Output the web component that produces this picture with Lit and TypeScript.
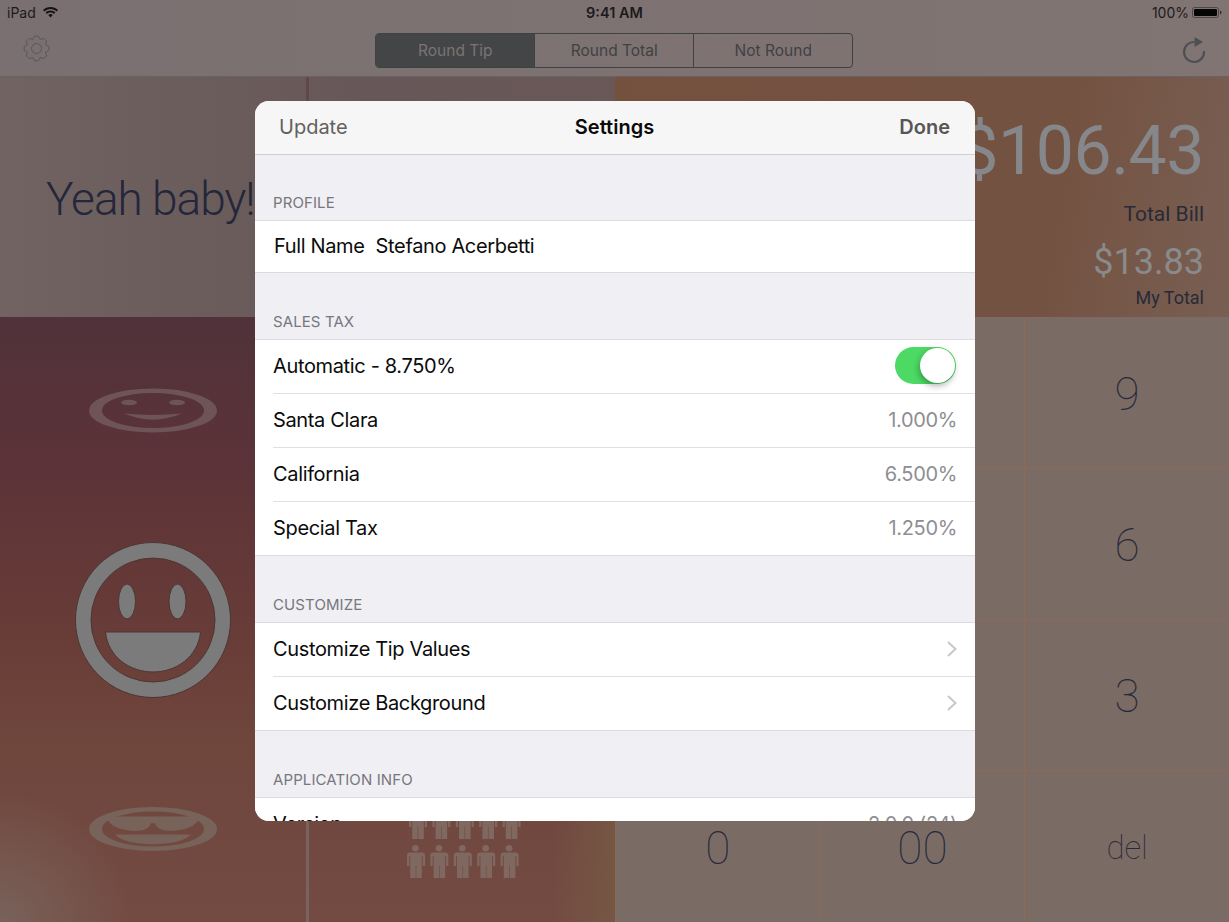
import { LitElement, html, css, svg } from 'lit';
import { customElement } from 'lit/decorators.js';

type Row = { label: string; value?: string; toggle?: boolean; chevron?: boolean };

const SECTIONS: { title: string; rows: Row[] }[] = [
  { title: 'SALES TAX', rows: [
    { label: 'Automatic - 8.750%', toggle: true },
    { label: 'Santa Clara', value: '1.000%' },
    { label: 'California', value: '6.500%' },
    { label: 'Special Tax', value: '1.250%' },
  ] },
  { title: 'CUSTOMIZE', rows: [
    { label: 'Customize Tip Values', chevron: true },
    { label: 'Customize Background', chevron: true },
  ] },
  { title: 'APPLICATION INFO', rows: [
    { label: 'Version', value: '2.0.0 (24)' },
  ] },
];

// the first two columns of the upper rows sit behind the settings sheet
const KEYS = ['', '', '9', '', '', '6', '', '', '3', '0', '00', 'del'];

// gear outline built from teeth around a circle
function gearPath(cx: number, cy: number, outer: number, inner: number, teeth: number) {
  const pts: string[] = [];
  for (let i = 0; i < teeth; i++) {
    const a = (i / teeth) * Math.PI * 2;
    const s = (Math.PI * 2) / teeth;
    const seq: [number, number][] = [
      [a - s * 0.5, inner],
      [a - s * 0.2, outer],
      [a + s * 0.2, outer],
    ];
    for (const [ang, r] of seq) {
      pts.push(`${(cx + Math.cos(ang) * r).toFixed(2)} ${(cy + Math.sin(ang) * r).toFixed(2)}`);
    }
  }
  return `M${pts.join('L')}Z`;
}

function person(x: number, y: number) {
  return svg`<g transform="translate(${x} ${y})" fill="#7f6860">
    <circle cx="9.500" cy="3.300" r="3.300" />
    <path d="M3 7.500h13q3 0 3 3v10.500h-2.300v-10h-.9v22h-5.500v-12.500h-.6v12.500h-5.500v-22h-.9v10h-2.300v-10.500q0-3 3-3z" />
  </g>`;
}

@customElement('app-root')
export class AppRoot extends LitElement {
  static styles = css`
    :host {
      display: block;
      width: 1229px;
      height: 922px;
      position: relative;
      overflow: hidden;
      font-family: Inter, 'Liberation Sans', sans-serif;
      background: #7d7373;
    }

    .topbar {
      height: 77px;
      box-sizing: border-box;
      background: linear-gradient(90deg, #7a7071, #817573);
      border-bottom: 1px solid #6a6161;
      display: flex;
      flex-direction: column;
    }

    .status {
      height: 24px;
      padding: 0 7px;
      display: grid;
      grid-template-columns: 1fr auto 1fr;
      align-items: center;
      font-size: 14px;
      color: #1c1a1b;
    }
    .status .left { display: flex; align-items: center; gap: 7px; }
    .status .time { font-weight: 600; font-size: 14.500px; }
    .status .right { display: flex; align-items: center; justify-content: flex-end; gap: 3px; }

    .tools {
      flex: 1;
      display: grid;
      grid-template-columns: 1fr auto 1fr;
      align-items: start;
      padding: 9px 23px 0 22.500px;
    }
    .tools svg { display: block; }
    .gear { margin-top: 2px; }
    .refresh { margin-top: 3px; justify-self: end; }

    .segments {
      display: flex;
      width: 478px;
      height: 35px;
      box-sizing: border-box;
      border: 1px solid #3f4143;
      border-radius: 4px;
      overflow: hidden;
    }
    .segments div {
      flex: 1;
      display: flex;
      align-items: center;
      justify-content: center;
      font-size: 15.500px;
      color: #3f4143;
      border-left: 1px solid #3f4143;
    }
    .segments div:first-child { border-left: 0; background: #434547; color: #7a7474; }

    .main {
      height: 845px;
      display: grid;
      grid-template-columns: 615px 614px;
      grid-template-rows: 240px 605px;
    }

    .message {
      background: linear-gradient(90deg, #716362, #675758 60%, #6a5857);
      display: flex;
      align-items: center;
      padding: 3px 0 0 46px;
      box-sizing: border-box;
      font-size: 46px;
      font-weight: 300;
      letter-spacing: -1px;
      color: #24273a;
      font-family: Roboto, sans-serif;
      position: relative;
    }
    .message::after {
      content: '';
      position: absolute;
      left: 306px;
      top: 0;
      width: 3px;
      height: 100%;
      background: #654648;
    }

    .totals {
      background: linear-gradient(100deg, #74503f, #745241 70%, #785f53);
      display: flex;
      flex-direction: column;
      align-items: flex-end;
      padding-right: 25px;
      font-family: Roboto, sans-serif;
    }
    .bill {
      font-size: 68px;
      color: #85878b;
      line-height: 80px;
      margin-top: 34px;
      letter-spacing: -0.5px;
    }
    .label { font-size: 21px; color: #272a38; line-height: 26px; }
    .bill-label { margin-top: 10px; }
    .mine { font-size: 36px; color: #8a8a8c; line-height: 42px; margin-top: 14px; }
    .mine-label { font-size: 18px; line-height: 22px; margin-top: 4px; }

    .tips {
      display: grid;
      grid-template-columns: 306px 3px 306px;
      background:
        radial-gradient(circle at 0 100%, #78625a 0, rgba(120, 98, 90, 0) 130px),
        linear-gradient(180deg, #50323a 0%, #5c3338 25%, #673b37 50%, #6f463c 70%, #744b43 100%);
    }
    .divider { background: #776360; }
    .faces { display: block; }
    .people {
      display: flex;
      flex-direction: column;
      justify-content: flex-end;
      align-items: center;
      padding-bottom: 44px;
      background: linear-gradient(90deg, transparent 80%, #755744);
    }
    .people svg { display: block; overflow: visible; }

    .keypad {
      display: grid;
      grid-template-columns: repeat(3, minmax(0, 1fr));
      grid-template-rows: repeat(4, minmax(0, 1fr));
      background: #7b6b65;
      font-family: Roboto, sans-serif;
      font-weight: 100;
      font-size: 46px;
      line-height: 1;
      color: #262a3a;
    }
    .keypad div {
      display: flex;
      align-items: center;
      justify-content: center;
      padding-top: 3px;
      border-left: 1px solid #8c6a56;
      border-bottom: 1px solid #8c6a56;
    }
    .keypad div:nth-last-child(-n + 3) { border-bottom: 0; }
    .keypad .word { font-size: 33px; }

    .sheet {
      position: absolute;
      left: 255px;
      top: 101px;
      width: 720px;
      height: 720px;
      border-radius: 14px;
      overflow: hidden;
      background: #efeff4;
      display: flex;
      flex-direction: column;
      font-family: Inter, 'Liberation Sans', sans-serif;
    }

    .nav {
      flex: none;
      height: 54px;
      box-sizing: border-box;
      background: #f6f6f6;
      border-bottom: 1px solid #cfcfd0;
      display: grid;
      grid-template-columns: 1fr auto 1fr;
      align-items: center;
      padding: 0 25px 2px 24px;
      font-size: 20px;
      color: #616161;
    }
    .nav .title { color: #0a0a0a; font-weight: 600; }
    .nav .done { justify-self: end; font-weight: 600; color: #565656; }

    .section-title {
      flex: none;
      height: 66px;
      box-sizing: border-box;
      padding: 0 0 8px 18px;
      font-size: 15px;
      letter-spacing: 0.1px;
      color: #77777c;
      display: flex;
      align-items: flex-end;
    }
    .section-title.first { height: 65px; }

    .group {
      flex: none;
      background: #fff;
      border-top: 1px solid #dcdce0;
      border-bottom: 1px solid #dcdce0;
    }

    .row {
      height: 54px;
      box-sizing: border-box;
      margin-left: 18px;
      padding: 0 18px 2px 0;
      display: flex;
      align-items: center;
      justify-content: space-between;
      font-size: 20px;
      letter-spacing: -0.35px;
      color: #0b0b0b;
      border-top: 1px solid #e0e0e3;
    }
    .row:first-child { border-top: 0; height: 53px; }
    .row .value { color: #8e8e93; }

    .row.name-row { height: 51px; margin-left: 19px; gap: 11px; justify-content: flex-start; }

    .toggle {
      width: 61px;
      height: 37px;
      margin-right: 1px;
      border-radius: 19px;
      background: #4cd964;
      position: relative;
    }
    .toggle::after {
      content: '';
      position: absolute;
      right: 1px;
      top: 1px;
      width: 35px;
      height: 35px;
      border-radius: 50%;
      background: #fff;
      box-shadow: -1px 3px 6px rgba(0, 0, 0, 0.3);
    }
  `;

  private renderFaces() {
    const light = '#6e5457';
    const lo = '#78635b';
    return html`<svg class="faces" width="306" height="605" viewBox="0 0 306 605">
      <!-- small smile, squashed -->
      <g transform="translate(153 93.500) scale(1 0.345)" fill=${light}>
        <circle r="57.500" fill="none" stroke=${light} stroke-width="13" />
        <ellipse cx="-24" cy="-23" rx="8" ry="8" />
        <ellipse cx="24" cy="-23" rx="8" ry="8" />
        <path d="M-29 9Q0 17 29 9Q0 44-29 9Z" />
      </g>
      <!-- big laughing face -->
      <g fill="#7b7b7b" stroke="#4d3634" stroke-width="1">
        <path fill-rule="evenodd" d="M153 225.500a77.500 77.500 0 1 0 0 155a77.500 77.500 0 1 0 0-155zM153 241a62 62 0 1 1 0 124a62 62 0 1 1 0-124z" />
        <ellipse cx="127" cy="284.500" rx="8.500" ry="17.500" />
        <ellipse cx="177.500" cy="284.500" rx="8.500" ry="17.500" />
        <path d="M105.500 315H200.500C198 340 176 355 153 355S108 340 105.500 315Z" />
      </g>
      <!-- sunglasses, squashed -->
      <g transform="translate(153 512) scale(1 0.345)" fill=${lo}>
        <circle r="57.500" fill="none" stroke=${lo} stroke-width="13" />
        <path d="M-41-36H41L46-30Q40 6 14 5Q4 2 2-17H-2Q-4 2-14 5Q-40 6-46-30Z" />
        <path d="M-38 16H38Q28 44 0 44Q-28 44-38 16Z" />
      </g>
    </svg>`;
  }

  private renderPeople() {
    const xs = [0, 23.400, 46.800, 70.200, 93.600];
    return html`<svg width="113" height="72" viewBox="0 0 113 72">
      ${xs.map((x) => person(x + 2, 0))}
      ${xs.map((x) => person(x, 39))}
    </svg>`;
  }

  private renderRow(r: Row) {
    return html`<div class="row">
      <span>${r.label}</span>
      ${r.value ? html`<span class="value">${r.value}</span>` : ''}
      ${r.toggle ? html`<div class="toggle"></div>` : ''}
      ${r.chevron
        ? html`<svg width="10" height="16" viewBox="0 0 10 16" fill="none" stroke="#c7c7cc" stroke-width="2"><path d="M1 1l7.500 7L1 15" /></svg>`
        : ''}
    </div>`;
  }

  render() {
    return html`
      <div class="topbar">
        <div class="status">
          <div class="left">
            <span>iPad</span>
            <svg width="15" height="11" viewBox="0 0 15 11" fill="#141213">
              <path d="M7.500 0C4.500 0 2 1.100 0 3l1.300 1.400C3 2.800 5.100 1.900 7.500 1.900s4.500.9 6.200 2.500L15 3C13 1.100 10.500 0 7.500 0z" />
              <path d="M7.500 3.600c-1.900 0-3.500.7-4.800 1.900L4 6.900c1-.9 2.100-1.400 3.500-1.400s2.500.5 3.500 1.400l1.300-1.400C11 4.300 9.400 3.600 7.500 3.600z" />
              <path d="M7.500 7C6.600 7 5.900 7.300 5.300 7.900l2.200 2.600 2.200-2.600C9.100 7.300 8.400 7 7.500 7z" />
            </svg>
          </div>
          <div class="time">9:41 AM</div>
          <div class="right">
            <span>100%</span>
            <svg width="30" height="11" viewBox="0 0 30 11">
              <rect x=".5" y=".5" width="26" height="10" rx="2" fill="none" stroke="#4b4748" />
              <rect x="2" y="2" width="23" height="7" rx="1" fill="#050505" />
              <path d="M28 3.500q1.500.5 1.500 2t-1.500 2z" fill="#2e2b2c" />
            </svg>
          </div>
        </div>
        <div class="tools">
          <svg class="gear" width="27" height="27" viewBox="0 0 27 27" fill="none" stroke="#5b5757" stroke-width="1">
            <path d=${gearPath(13.5, 13.5, 12.5, 9.8, 8)} stroke-linejoin="round" />
            <circle cx="13.5" cy="13.5" r="5" />
          </svg>
          <div class="segments">
            <div>Round Tip</div>
            <div>Round Total</div>
            <div>Not Round</div>
          </div>
          <svg class="refresh" width="24" height="28" viewBox="0 0 24 28" fill="none">
            <path d="M12.500 6A10 10 0 1 0 22 15" stroke="#4d4f52" stroke-width="2.200" />
            <path d="M12.500 1L21 6L12.500 11z" fill="#4d4f52" />
          </svg>
        </div>
      </div>

      <div class="main">
        <div class="message">Yeah baby!</div>
        <div class="totals">
          <div class="bill">$106.43</div>
          <div class="label bill-label">Total Bill</div>
          <div class="mine">$13.83</div>
          <div class="label mine-label">My Total</div>
        </div>
        <div class="tips">
          ${this.renderFaces()}
          <div class="divider"></div>
          <div class="people">${this.renderPeople()}</div>
        </div>
        <div class="keypad">
          ${KEYS.map((k) => html`<div class=${k === 'del' ? 'word' : ''}>${k}</div>`)}
        </div>
      </div>

      <div class="sheet">
        <div class="nav">
          <span>Update</span>
          <span class="title">Settings</span>
          <span class="done">Done</span>
        </div>
        <div class="section-title first">PROFILE</div>
        <div class="group">
          <div class="row name-row"><span>Full Name</span><span>Stefano Acerbetti</span></div>
        </div>
        ${SECTIONS.map((s) => html`
          <div class="section-title">${s.title}</div>
          <div class="group">${s.rows.map((r) => this.renderRow(r))}</div>
        `)}
      </div>
    `;
  }
}
